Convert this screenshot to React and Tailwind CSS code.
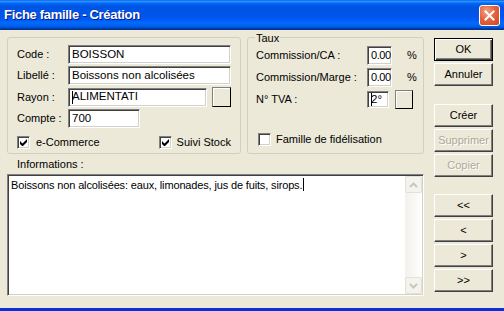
import React from "react";

const raised =
  "bg-[#ECE9D8] border border-t-white border-l-white border-b-[#404040] border-r-[#404040] shadow-[inset_-1px_-1px_0_#808080]";
const sunken =
  "bg-white border border-t-[#808080] border-l-[#808080] border-b-white border-r-white shadow-[inset_1px_1px_0_#404040,inset_-1px_-1px_0_#D4D0C8]";

function Field({ value, className = "", caret = false }) {
  return (
    <div className={`${sunken} h-[19px] flex items-center pl-[3px] text-[11.5px] leading-none whitespace-nowrap overflow-hidden ${className}`}>
      {caret && <span className="w-px h-[13px] bg-black -mr-px" />}
      {value}
    </div>
  );
}

function Check({ checked }) {
  return (
    <div className={`${sunken} w-[13px] h-[13px] flex items-center justify-center shrink-0`}>
      {checked && (
        <svg width="7" height="7" viewBox="0 0 7 7">
          <path d="M0 2v3l2 2h1l4-4V0L2.5 4.5z" fill="#000" />
        </svg>
      )}
    </div>
  );
}

function Btn({ children, def = false, disabled = false }) {
  if (def) {
    return (
      <div className="w-[59px] h-[23px] border border-black flex items-center justify-center bg-[#ECE9D8] shadow-[inset_1px_1px_0_#fff,inset_-1px_-1px_0_#404040,inset_-2px_-2px_0_#808080]">
        {children}
      </div>
    );
  }
  return (
    <div className={`${raised} w-[59px] h-[23px] flex items-center justify-center ${disabled ? "text-[#ACA899] [text-shadow:1px_1px_0_#fff]" : ""}`}>
      {children}
    </div>
  );
}

function Chevron({ up }) {
  return (
    <svg width="9" height="6" viewBox="0 0 9 6">
      <path d={up ? "M1 5l3.5-3.5L8 5" : "M1 1l3.5 3.5L8 1"} fill="none" stroke="#C9C7BA" strokeWidth="2" />
    </svg>
  );
}

export default function App() {
  return (
    <div className="w-[504px] h-[311px] bg-[#ECE9D8] flex flex-col overflow-hidden font-['Liberation_Sans',Arial,sans-serif] text-[11px] text-black">
      {/* title bar */}
      <div className="h-[30px] shrink-0 flex items-center justify-between pl-[4px] pr-[4px] bg-[linear-gradient(to_bottom,#0058EE_0%,#3593FF_4%,#288EFF_6%,#127DFF_8%,#036FFC_10%,#0262EE_14%,#0057E5_20%,#0054E3_24%,#0055EB_56%,#005BF5_66%,#026AFE_76%,#0062EF_86%,#0052D6_92%,#0040AB_94%,#003092_100%)]">
        <span className="text-white font-bold text-[13px] tracking-[-0.3px] [text-shadow:1px_1px_0_#0A1883]">
          Fiche famille - Création
        </span>
        <div className="w-[21px] h-[21px] rounded-[3px] border border-white flex items-center justify-center bg-[radial-gradient(circle_at_35%_30%,#F3A184_0%,#E5643F_45%,#CC4420_100%)]">
          <svg width="11" height="11" viewBox="0 0 11 11">
            <path d="M1.5 1.5l8 8M9.5 1.5l-8 8" stroke="#fff" strokeWidth="2" strokeLinecap="square" />
          </svg>
        </div>
      </div>

      {/* content */}
      <div className="flex-1 flex pl-[7px] pt-[7px]">
        <div className="w-[417px] flex flex-col">
          <div className="flex gap-[6px]">
            {/* left group */}
            <div className="w-[234px] h-[117px] border border-[#D0D0BF] rounded-[3px] px-[9px] pt-[7px] flex flex-col">
              <div className="flex flex-col gap-[2px]">
                <div className="flex items-center">
                  <span className="w-[51px]">Code :</span>
                  <Field value="BOISSON" className="w-[163px]" />
                </div>
                <div className="flex items-center">
                  <span className="w-[51px]">Libellé :</span>
                  <Field value="Boissons non alcolisées" className="w-[163px]" />
                </div>
                <div className="flex items-center">
                  <span className="w-[51px]">Rayon :</span>
                  <Field value="ALIMENTATI" caret className="w-[139px] pl-[2px]" />
                  <div className="ml-[5px] w-[19px] h-[20px] border border-t-[#808080] border-l-[#808080] border-b-black border-r-black bg-[#ECE9D8] shadow-[inset_1px_1px_0_#fff]" />
                </div>
                <div className="flex items-center">
                  <span className="w-[51px]">Compte :</span>
                  <Field value="700" className="w-[72px]" />
                </div>
              </div>
              <div className="flex justify-between items-center mt-[6px]">
                <div className="flex items-center gap-[6px]">
                  <Check checked />
                  <span>e-Commerce</span>
                </div>
                <div className="flex items-center gap-[5px]">
                  <Check checked />
                  <span>Suivi Stock</span>
                </div>
              </div>
            </div>

            {/* right group */}
            <div className="relative w-[178px] h-[117px] border border-[#D0D0BF] rounded-[3px] pl-[8px] pt-[8px] flex flex-col">
              <span className="absolute -top-[8px] left-[7px] px-[1px] bg-[#ECE9D8]">Taux</span>
              <div className="flex flex-col gap-[3px]">
                <div className="flex items-center">
                  <span className="w-[111px]">Commission/CA :</span>
                  <Field value="0.00" className="w-[25px] pl-[2px] text-[11px] tracking-[-0.4px]" />
                  <span className="ml-[15px]">%</span>
                </div>
                <div className="flex items-center">
                  <span className="w-[111px]">Commission/Marge :</span>
                  <Field value="0.00" className="w-[25px] pl-[2px] text-[11px] tracking-[-0.4px]" />
                  <span className="ml-[15px]">%</span>
                </div>
                <div className="flex items-center">
                  <span className="w-[111px]">N° TVA :</span>
                  <Field value="2°" caret className="w-[22px] !h-[17px] pl-[2px]" />
                  <div className="ml-[6px] w-[18px] h-[19px] border border-t-[#808080] border-l-[#808080] border-b-black border-r-black bg-[#ECE9D8] shadow-[inset_1px_1px_0_#fff]" />
                </div>
              </div>
              <div className="flex items-center gap-[5px] mt-[22px] ml-[2px]">
                <Check />
                <span>Famille de fidélisation</span>
              </div>
            </div>
          </div>

          <div className="h-[20px] pl-[10px] flex items-center">Informations :</div>

          {/* textarea */}
          <div className={`${sunken} h-[122px] flex`}>
            <div className="flex-1 pl-[3px] pt-[3px] text-[11px] leading-[14px] tracking-[-0.15px] flex items-start">
              <span>Boissons non alcolisées: eaux, limonades, jus de fuits, sirops.</span>
              <span className="w-px h-[13px] bg-black ml-[1px]" />
            </div>
            <div className="w-[17px] my-[1px] mr-[1px] flex flex-col bg-[linear-gradient(to_right,#F3F1EC,#FEFEFE)]">
              <div className="h-[17px] rounded-[2px] border border-[#E4E2D8] bg-[#F4F3EE] flex items-center justify-center">
                <Chevron up />
              </div>
              <div className="flex-1" />
              <div className="h-[17px] rounded-[2px] border border-[#E4E2D8] bg-[#F4F3EE] flex items-center justify-center">
                <Chevron />
              </div>
            </div>
          </div>
        </div>

        {/* button column */}
        <div className="ml-[10px] pt-[1px] flex flex-col">
          <div className="flex flex-col gap-[2px]">
            <Btn def>OK</Btn>
            <Btn>Annuler</Btn>
          </div>
          <div className="flex flex-col gap-[2px] mt-[18px]">
            <Btn>Créer</Btn>
            <Btn disabled>Supprimer</Btn>
            <Btn disabled>Copier</Btn>
          </div>
          <div className="flex flex-col gap-[2px] mt-[17px]">
            <Btn>&lt;&lt;</Btn>
            <Btn>&lt;</Btn>
            <Btn>&gt;</Btn>
            <Btn>&gt;&gt;</Btn>
          </div>
        </div>
      </div>

      <div className="h-[3px] shrink-0 bg-[#0831D9]" />
    </div>
  );
}
